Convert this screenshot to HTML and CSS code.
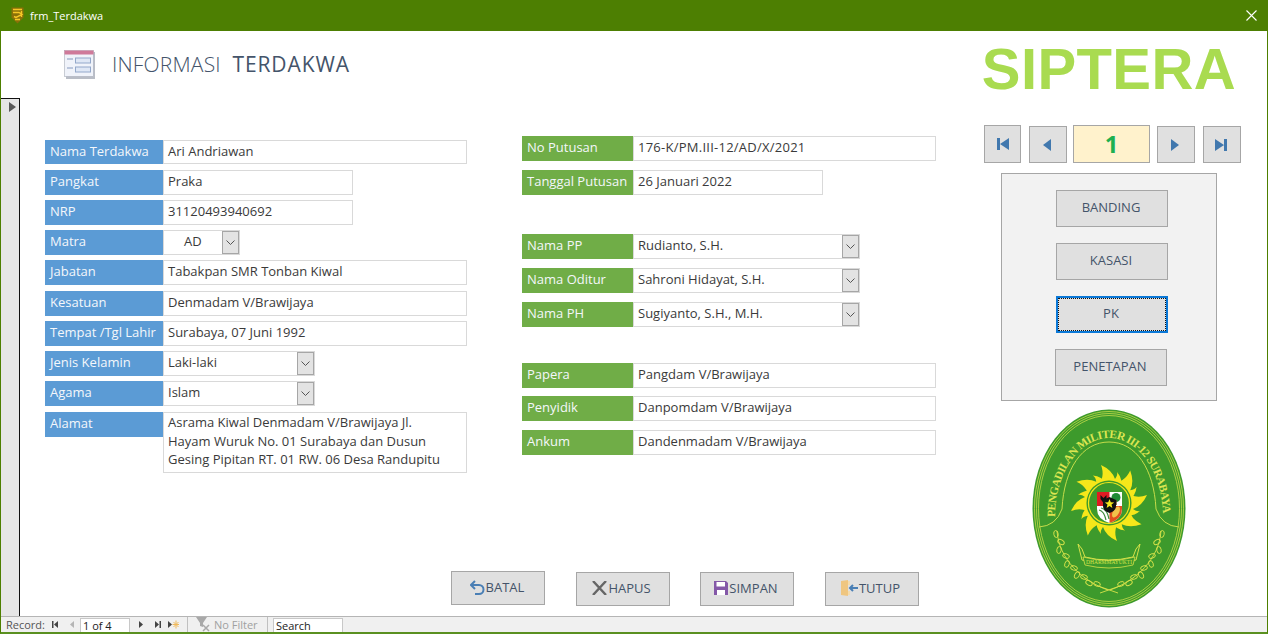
FILE: index.html
```html
<!DOCTYPE html>
<html lang="id">
<head>
<meta charset="utf-8">
<title>frm_Terdakwa</title>
<link rel="stylesheet" href="styles.css">
</head>
<body>
<div class="window">
  <header class="titlebar">
    <svg class="app-icon" width="13" height="17" viewBox="0 0 13 17"><path d="M.5.500h12v10l-6 6-6-6z" fill="#8a7008"/><path d="M2 2.500h9M2 5.500h6l3 2-6 3-2-1M4 12.500h5M10.500 4v6" fill="none" stroke="#f5c626" stroke-width="1.400"/></svg>
    <span class="title-text">frm_Terdakwa</span>
    <svg class="close-icon" width="11" height="11" viewBox="0 0 11 11"><path d="M.5.500l10 10M10.500.500l-10 10" stroke="#fff" stroke-width="1.100"/></svg>
  </header>

  <div class="form-header">
    <svg class="form-icon" width="32" height="30" viewBox="0 0 32 30">
      <rect x="2" y="2" width="29" height="27" fill="#b9bdc6"/>
      <rect x=".5" y=".5" width="29" height="26" fill="#f0f3fa" stroke="#a8aeba" stroke-width=".6"/>
      <rect x=".5" y=".5" width="29" height="4" fill="#cf7a9a"/>
      <path d="M3 9h6M3 18h6" stroke="#a9b8d2" stroke-width="1.500"/>
      <rect x="11.500" y="8" width="15" height="5" fill="#dfe7f5" stroke="#93a8ca"/>
      <rect x="11.500" y="17" width="15" height="5" fill="#dfe7f5" stroke="#93a8ca"/>
    </svg>
    <h1 class="form-title"><span class="light">INFORMASI</span> <span class="strong">TERDAKWA</span></h1>
    <div class="brand">SIPTERA</div>
  </div>

  <div class="form-body">
    <div class="selector"><span class="selector-arrow"></span></div>
    <main class="content">
      <div class="columns">
        <section class="col-left">
          <div class="row h24"><label class="lbl blue">Nama Terdakwa</label><div class="fld w-304">Ari Andriawan</div></div>
          <div class="row t6"><label class="lbl blue">Pangkat</label><div class="fld w-190">Praka</div></div>
          <div class="row"><label class="lbl blue">NRP</label><div class="fld w-190">31120493940692</div></div>
          <div class="row"><label class="lbl blue">Matra</label><div class="fld w-77 centered">AD<span class="drop small"><svg width="9" height="5" viewBox="0 0 9 5"><path d="M.5.500l4 4 4-4" fill="none" stroke="#555"/></svg></span></div></div>
          <div class="row"><label class="lbl blue">Jabatan</label><div class="fld w-304">Tabakpan SMR Tonban Kiwal</div></div>
          <div class="row t6"><label class="lbl blue">Kesatuan</label><div class="fld w-304">Denmadam V/Brawijaya</div></div>
          <div class="row"><label class="lbl blue">Tempat /Tgl Lahir</label><div class="fld w-304">Surabaya, 07 Juni 1992</div></div>
          <div class="row"><label class="lbl blue">Jenis Kelamin</label><div class="fld w-152">Laki-laki<span class="drop"><svg width="9" height="5" viewBox="0 0 9 5"><path d="M.5.500l4 4 4-4" fill="none" stroke="#555"/></svg></span></div></div>
          <div class="row"><label class="lbl blue">Agama</label><div class="fld w-152">Islam<span class="drop"><svg width="9" height="5" viewBox="0 0 9 5"><path d="M.5.500l4 4 4-4" fill="none" stroke="#555"/></svg></span></div></div>
          <div class="row t6 top"><label class="lbl blue">Alamat</label><div class="fld w-304 multi">Asrama Kiwal Denmadam V/Brawijaya Jl. Hayam Wuruk No. 01 Surabaya dan Dusun Gesing Pipitan RT. 01 RW. 06 Desa Randupitu</div></div>
        </section>
        <section class="col-right">
          <div class="row"><label class="lbl green">No Putusan</label><div class="fld w-303 wide">176-K/PM.III-12/AD/X/2021</div></div>
          <div class="row t9"><label class="lbl green">Tanggal Putusan</label><div class="fld w-190">26 Januari 2022</div></div>
          <div class="row t39"><label class="lbl green">Nama PP</label><div class="fld w-227">Rudianto, S.H.<span class="drop"><svg width="9" height="5" viewBox="0 0 9 5"><path d="M.5.500l4 4 4-4" fill="none" stroke="#555"/></svg></span></div></div>
          <div class="row t9"><label class="lbl green">Nama Oditur</label><div class="fld w-227">Sahroni Hidayat, S.H.<span class="drop"><svg width="9" height="5" viewBox="0 0 9 5"><path d="M.5.500l4 4 4-4" fill="none" stroke="#555"/></svg></span></div></div>
          <div class="row t9"><label class="lbl green">Nama PH</label><div class="fld w-227">Sugiyanto, S.H., M.H.<span class="drop"><svg width="9" height="5" viewBox="0 0 9 5"><path d="M.5.500l4 4 4-4" fill="none" stroke="#555"/></svg></span></div></div>
          <div class="row t36"><label class="lbl green">Papera</label><div class="fld w-303">Pangdam V/Brawijaya</div></div>
          <div class="row t8"><label class="lbl green">Penyidik</label><div class="fld w-303">Danpomdam V/Brawijaya</div></div>
          <div class="row t9"><label class="lbl green">Ankum</label><div class="fld w-303">Dandenmadam V/Brawijaya</div></div>
        </section>
      </div>
      <div class="actions">
        <button class="act first">
          <svg width="15" height="15" viewBox="0 0 15 15"><path d="M5 1L1 5l4 4M1.500 5H9a4.500 4.500 0 0 1 0 9H5" fill="none" stroke="#4a7fb5" stroke-width="2"/></svg>BATAL</button>
        <button class="act">
          <svg width="15" height="14" viewBox="0 0 15 14"><path d="M1 0l13 14M14 0L1 14" stroke="#666" stroke-width="2.400"/></svg>HAPUS</button>
        <button class="act">
          <svg width="14" height="14" viewBox="0 0 14 14"><path d="M0 0h12l2 2v12H0z" fill="#8458a8"/><rect x="2.500" y="1" width="8.500" height="4.500" fill="#fff"/><rect x="3" y="9" width="8" height="5" fill="#fff"/></svg>SIMPAN</button>
        <button class="act">
          <svg width="17" height="16" viewBox="0 0 17 16"><path d="M0 1l7-1v16l-7-1z" fill="#efc680"/><path d="M7 1h2v4H7zM7 11h2v4H7z" fill="#f4dcae"/><path d="M17 8H9M12 5L9 8l3 3" fill="none" stroke="#4a7fb5" stroke-width="2"/></svg>TUTUP</button>
      </div>
    </main>
    <aside class="side">
      <nav class="pager">
        <button class="pg tall"><svg width="12" height="12" viewBox="0 0 12 12"><path d="M0 0h3v12H0zM12 0v12L3 6z" fill="#4178ae"/></svg></button>
        <button class="pg"><svg width="8" height="12" viewBox="0 0 8 12"><path d="M8 0v12L0 6z" fill="#4178ae"/></svg></button>
        <div class="pg-num">1</div>
        <button class="pg"><svg width="8" height="12" viewBox="0 0 8 12"><path d="M0 0v12l8-6z" fill="#4178ae"/></svg></button>
        <button class="pg"><svg width="12" height="12" viewBox="0 0 12 12"><path d="M0 0v12l9-6zM9 0h3v12H9z" fill="#4178ae"/></svg></button>
      </nav>
      <div class="panel">
        <button class="pbtn">BANDING</button>
        <button class="pbtn">KASASI</button>
        <button class="pbtn focus">PK</button>
        <button class="pbtn shift">PENETAPAN</button>
      </div>
      <svg class="logo" width="155" height="200" viewBox="0 0 155 200">
        <defs>
          <path id="ray" d="M-13-15Q-3-25-8-38Q3-33 6-24Q9-28 8-31Q14-24 12-15Z" fill="#f6e71a"/>
          <path id="arc" d="M23 108A54 79 0 0 1 131 108"/>
          <g id="leaves">
            <ellipse cx="24" cy="125" rx="3.500" ry="2.200" transform="rotate(80 24 125)"/>
            <ellipse cx="29" cy="133" rx="3.500" ry="2.200" transform="rotate(30 29 133)"/>
            <ellipse cx="27" cy="141" rx="3.500" ry="2.200" transform="rotate(100 27 141)"/>
            <ellipse cx="34" cy="147" rx="3.500" ry="2.200" transform="rotate(20 34 147)"/>
            <ellipse cx="35" cy="155" rx="3.500" ry="2.200" transform="rotate(110 35 155)"/>
            <ellipse cx="42" cy="159" rx="3.500" ry="2.200" transform="rotate(15 42 159)"/>
            <ellipse cx="45" cy="166" rx="3.500" ry="2.200" transform="rotate(120 45 166)"/>
            <ellipse cx="52" cy="168" rx="3.500" ry="2.200" transform="rotate(15 52 168)"/>
            <ellipse cx="57" cy="174" rx="3.500" ry="2.200" transform="rotate(30 57 174)"/>
            <ellipse cx="65" cy="175" rx="3.500" ry="2.200" transform="rotate(20 65 175)"/>
          </g>
        </defs>
        <ellipse cx="77" cy="99.500" rx="76.500" ry="99" fill="#3d9a2c"/>
        <ellipse cx="77" cy="99.500" rx="74.500" ry="97" fill="none" stroke="#c5dc4a" stroke-width=".8"/>
        <ellipse cx="77" cy="99.500" rx="72.500" ry="95" fill="none" stroke="#c5dc4a" stroke-width=".8"/>
        <ellipse cx="77" cy="99.500" rx="70.500" ry="93" fill="none" stroke="#c5dc4a" stroke-width=".8"/>
        <text class="logo-arc"><textPath href="#arc" textLength="207" lengthAdjust="spacing">PENGADILAN MILITER III-12 SURABAYA</textPath></text>
        <path d="M7 118Q24 117 30 100C32 60 50 33 77 33C104 33 122 60 124 100Q130 117 147 118" fill="none" stroke="#c5dc4a" stroke-width="1"/>
        <g transform="translate(77 94)">
          <use href="#ray"/>
          <use href="#ray" transform="rotate(45)"/>
          <use href="#ray" transform="rotate(90)"/>
          <use href="#ray" transform="rotate(135)"/>
          <use href="#ray" transform="rotate(180)"/>
          <use href="#ray" transform="rotate(225)"/>
          <use href="#ray" transform="rotate(270)"/>
          <use href="#ray" transform="rotate(315)"/>
        </g>
        <circle cx="77" cy="94" r="24" fill="#f6e71a"/>
        <circle cx="77" cy="94" r="22.500" fill="#3d9a2c"/>
        <circle cx="77" cy="94" r="20.500" fill="none" stroke="#f6e71a" stroke-width="1.200"/>
        <circle cx="77" cy="94" r="18.500" fill="#3d9a2c"/>
        <path d="M65 83h25v17q0 10-12.500 14Q65 110 65 100z" fill="#fff"/>
        <path d="M65 83h12.500v14H65z" fill="#e01b22"/>
        <path d="M77.500 97H90v3q0 10-12.500 14z" fill="#e2501f"/>
        <path d="M68.500 86l3 3 3-3v4l-3 4-3-4z" fill="#111"/>
        <circle cx="84" cy="88.500" r="4.500" fill="#1f8a35"/><rect x="83.300" y="91" width="1.400" height="5" fill="#5a3b18"/>
        <path d="M67 101q5 1 7 10M69 99q6 1 8 11" fill="none" stroke="#3c8b3a" stroke-width="1.200"/>
        <ellipse cx="84" cy="103" rx="3" ry="6" transform="rotate(30 84 103)" fill="#f1c34a"/>
        <path d="M71 91l6.500-3 6.500 3v6q0 5-6.500 7-6.500-2-6.500-7z" fill="#111"/>
        <path d="M77.500 90l1.300 3.300 3.400.2-2.700 2.100.9 3.400-2.900-1.900-2.900 1.900.9-3.400-2.700-2.100 3.400-.2z" fill="#f6e71a"/>
        <path class="wreath" d="M25 122C27 150 50 172 76 181M129 122C127 150 104 172 78 181"/>
        <use href="#leaves" class="wreath"/>
        <use href="#leaves" class="wreath" transform="translate(154 0) scale(-1 1)"/>
        <path class="wreath" d="M68 184l20-7M86 184l-20-7"/>
        <path d="M46 135l4 16q26 8 54 0l4-16-4 5-3 8q-25 6-48 0l-3-8z" fill="#3d9a2c" stroke="#d7e24a"/>
        <path d="M51 148q26 7 52 0l-2 8q-24 6-48 0z" fill="#3d9a2c" stroke="#d7e24a" stroke-width=".8"/>
        <text class="logo-motto" x="77" y="155" textLength="46" lengthAdjust="spacingAndGlyphs">DHARMMAYUKTI</text>
      </svg>
    </aside>
  </div>

  <footer class="statusbar">
    <span class="rec">Record:</span>
    <svg class="st-ic first-ic" width="6" height="7" viewBox="0 0 6 7"><path d="M0 0h1.500v7H0zM6 0v7L2 3.500z" fill="#444"/></svg>
    <svg class="st-ic prev-ic" width="4" height="7" viewBox="0 0 4 7"><path d="M4 0v7L0 3.500z" fill="#b5b5b5"/></svg>
    <span class="rec-box">1 of 4</span>
    <svg class="st-ic next-ic" width="4" height="7" viewBox="0 0 4 7"><path d="M0 0v7l4-3.500z" fill="#444"/></svg>
    <svg class="st-ic last-ic" width="6" height="7" viewBox="0 0 6 7"><path d="M0 0v7l4-3.500zM4.500 0H6v7H4.500z" fill="#444"/></svg>
    <svg class="st-ic new-ic" width="11" height="9" viewBox="0 0 11 9"><path d="M0 1v7l4-3.500z" fill="#444"/><path d="M8 .5v8M4.500 4.500h7M5.500 2l5 5M10.500 2l-5 5" stroke="#f0b95a" stroke-width="1"/></svg>
    <span class="divider first-div"></span>
    <svg class="filter-ic" width="16" height="15" viewBox="0 0 16 15"><path d="M0 0h11L7 6v4L4 9V6z" fill="#a8a8a8"/><path d="M7 8l6 6M13 8l-6 6" stroke="#a8a8a8" stroke-width="1.500"/></svg>
    <span class="nofilter">No Filter</span>
    <span class="divider"></span>
    <span class="search">Search</span>
  </footer>
</div>
</body>
</html>
```

FILE: styles.css
```css
* { box-sizing: border-box; }
html, body { margin: 0; height: 100%; }
body { font-family: "Open Sans", "Noto Sans", sans-serif; font-size: 13px; color: #3a3a3a; background: #fff; overflow: hidden; }
button { font-family: inherit; padding: 0; cursor: default; }

.window { width: 1268px; height: 634px; display: flex; flex-direction: column; border-left: 1px solid #4d7f00; border-right: 1px solid #4d7f00; border-bottom: 2px solid #5a9020; }

.titlebar { height: 31px; margin: 0 -1px; flex: none; background: #4d7f02; display: flex; align-items: center; padding: 0 11px; color: #fff; font-size: 11px; }
.app-icon { margin-right: 6px; }
.title-text { flex: 1; }

.form-header { height: 67px; flex: none; display: flex; align-items: flex-start; position: relative; }
.form-icon { margin: 19px 0 0 63px; }
.form-title { margin: 19px 0 0 16px; font-size: 21px; line-height: 28px; font-weight: 400; color: #44546a; letter-spacing: .2px; word-spacing: 6px; flex: 1; white-space: nowrap; }
.form-title .light { font-weight: 300; }
.form-title .strong { font-weight: 500; letter-spacing: .9px; }
.brand { font-family: "Liberation Sans", Arial, sans-serif; font-weight: 700; font-size: 58px; line-height: 64px; color: #a9db50; margin: 6px 31px 0 0; letter-spacing: .4px; }

.form-body { flex: 1; display: flex; min-height: 0; }
.selector { width: 19px; flex: none; background: #e6e6e6; border-top: 1px solid #111; border-right: 1px solid #111; padding: 3px 0 0 8px; }
.selector-arrow { display: block; width: 0; height: 0; border-left: 7px solid #595959; border-top: 5px solid transparent; border-bottom: 5px solid transparent; }

.content { width: 920px; flex: none; display: flex; flex-direction: column; padding-bottom: 10px; }
.columns { display: flex; align-items: flex-start; }
.col-left { width: 422px; margin: 42px 0 0 25px; }
.col-right { width: 414px; margin: 38px 0 0 55px; }

.row { display: flex; height: 25px; margin-top: 5px; }
.row:first-child { margin-top: 0; }
.row.h24 { height: 24px; }
.row.t6 { margin-top: 6px; }
.row.t8 { margin-top: 8px; }
.row.t9 { margin-top: 9px; }
.row.t36 { margin-top: 36px; }
.row.t39 { margin-top: 39px; }
.row.top { height: 61px; }

.lbl { flex: none; height: 25px; padding-left: 5px; line-height: 23px; color: #f4f7fb; white-space: nowrap; }
.h24 .lbl { height: 24px; }
.lbl.blue { width: 118px; background: #5b9bd5; }
.lbl.green { width: 111px; background: #70ad47; padding-left: 5px; }

.fld { position: relative; height: 100%; border: 1px solid #d9d9d9; background: #fff; padding-left: 4px; line-height: 21px; color: #3a3a3a; white-space: nowrap; }
.fld.multi { white-space: normal; line-height: 18.500px; padding-right: 12px; }
.fld.centered { padding-left: 20px; }
.fld.wide { letter-spacing: .25px; }
.w-77 { width: 77px; }
.w-152 { width: 152px; }
.w-190 { width: 190px; }
.w-227 { width: 227px; }
.w-303 { width: 303px; }
.w-304 { width: 304px; }

.drop { position: absolute; top: 0; right: 0; width: 17px; height: 23px; background: #e3e3e3; border: 1px solid #a6a6a6; display: flex; align-items: center; justify-content: center; }

.actions { margin: auto 0 0 431px; display: flex; gap: 31px; }
.act { width: 94px; height: 34px; margin-top: 1px; margin-left: -.500px; background: #e0e0e0; border: 1px solid #a6a6a6; padding: 0 2px 2px 0; display: flex; align-items: center; justify-content: center; gap: 1px; color: #44546a; font-size: 13px; }
.act.first { margin-top: 0; margin-left: 0; }
.act svg { flex: none; }

.side { flex: 1; display: flex; flex-direction: column; min-width: 0; }
.pager { display: flex; margin: 27px 0 0 44px; align-items: flex-start; }
.pg { width: 38px; height: 37px; margin: 1px 6px 0 0; background: #e0e0e0; border: 1px solid #a6a6a6; padding-right: 2px; display: flex; align-items: center; justify-content: center; }
.pg.tall { width: 37px; height: 38px; margin: 0 8px 0 0; padding-right: 0; }
.pg:nth-child(4) { margin-left: 1px; margin-right: 8px; }
.pg-num { width: 77px; height: 38px; margin-right: 6px; background: #fff2cc; border: 1px solid #a6a6a6; text-align: center; font-size: 24px; line-height: 36px; font-weight: 700; color: #1eb050; }
.panel { width: 216px; height: 228px; margin: 10px 0 0 61px; background: #f2f2f2; border: 1px solid #a6a6a6; padding: 16px 0 0 54px; display: flex; flex-direction: column; gap: 16px; }
.pbtn { width: 112px; height: 37px; background: #e0e0e0; border: 1px solid #a6a6a6; padding: 0 2px 4px 0; color: #44546a; font-size: 13px; }
.pbtn.focus { border: 2px solid #0a78d7; outline: 1px dotted #111; outline-offset: -3px; }
.pbtn.shift { margin-left: -1px; }
.logo { margin: 8px 0 0 92px; flex: none; }
.logo-arc { font-family: "Liberation Serif", serif; font-size: 11.500px; font-weight: 700; fill: #dbe552; }
.logo-motto { font-family: "Liberation Serif", serif; font-size: 6px; fill: #d7e24a; text-anchor: middle; }
.wreath { fill: none; stroke: #d7e24a; stroke-width: .9; }

.statusbar { height: 16px; flex: none; background: #f0f0f0; border-top: 1px solid #b5b5b5; display: flex; align-items: center; font-size: 11px; color: #555; overflow: hidden; }
.rec { margin-left: 5px; width: 45px; }
.st-ic { flex: none; }
.first-ic { margin-left: 1px; }
.prev-ic { margin-left: 12px; }
.rec-box { width: 50px; height: 15px; margin: 1px 0 0 6px; background: #fff; border: 1px solid #c8c8c8; color: #222; padding-left: 2px; line-height: 14px; }
.next-ic { margin-left: 9px; }
.last-ic { margin-left: 12px; }
.new-ic { margin-left: 7px; }
.divider { width: 1px; height: 16px; background: #c0c0c0; margin-left: 6px; }
.first-div { margin-left: 8px; }
.filter-ic { margin-left: 8px; }
.nofilter { margin-left: 2px; color: #a0a0a0; width: 47px; }
.search { width: 70px; height: 15px; margin: 1px 0 0 5px; background: #fff; border: 1px solid #c8c8c8; color: #222; padding-left: 2px; line-height: 14px; }
```
